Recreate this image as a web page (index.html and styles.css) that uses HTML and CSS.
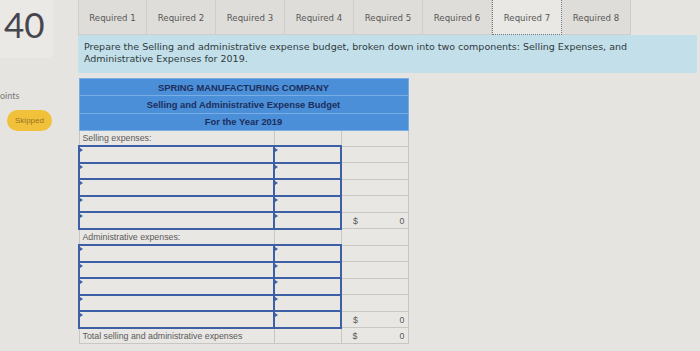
FILE: index.html
```
<!DOCTYPE html>
<html>
<head>
<meta charset="utf-8">
<link rel="stylesheet" href="styles.css">
</head>
<body>
<div class="page">
  <aside class="side">
    <div class="qcard"><span class="qnum">40</span></div>
    <div class="pts">oints</div>
    <div class="skip">Skipped</div>
  </aside>
  <main class="main">
    <nav class="tabs">
      <div class="tab">Required 1</div>
      <div class="tab">Required 2</div>
      <div class="tab">Required 3</div>
      <div class="tab">Required 4</div>
      <div class="tab">Required 5</div>
      <div class="tab">Required 6</div>
      <div class="tab active">Required 7</div>
      <div class="tab">Required 8</div>
    </nav>
    <div class="instr">Prepare the Selling and administrative expense budget, broken down into two components: Selling Expenses, and Administrative Expenses for 2019.</div>
    <table class="budget">
      <colgroup><col class="c1"><col class="c2"><col class="c3"></colgroup>
      <tr class="hd"><th colspan="3">SPRING MANUFACTURING COMPANY</th></tr>
      <tr class="hd"><th colspan="3">Selling and Administrative Expense Budget</th></tr>
      <tr class="hd"><th colspan="3">For the Year 2019</th></tr>
      <tr><td class="lbl">Selling expenses:</td><td></td><td></td></tr>
      <tr><td class="in"></td><td class="in"></td><td></td></tr>
      <tr><td class="in"></td><td class="in"></td><td></td></tr>
      <tr><td class="in"></td><td class="in"></td><td></td></tr>
      <tr><td class="in"></td><td class="in"></td><td></td></tr>
      <tr><td class="in"></td><td class="in"></td><td class="amt"><span>$</span><span>0</span></td></tr>
      <tr><td class="lbl">Administrative expenses:</td><td></td><td></td></tr>
      <tr><td class="in"></td><td class="in"></td><td></td></tr>
      <tr><td class="in"></td><td class="in"></td><td></td></tr>
      <tr><td class="in"></td><td class="in"></td><td></td></tr>
      <tr><td class="in"></td><td class="in"></td><td></td></tr>
      <tr><td class="in"></td><td class="in"></td><td class="amt"><span>$</span><span>0</span></td></tr>
      <tr><td class="lbl">Total selling and administrative expenses</td><td></td><td class="amt"><span>$</span><span>0</span></td></tr>
    </table>
  </main>
</div>
</body>
</html>
```
FILE: styles.css
```
html, body {
  margin: 0;
  padding: 0;
  background: #e6e4e0;
  overflow: hidden;
}
.page {
  display: flex;
  width: 700px;
  height: 351px;
}
.side {
  width: 78px;
  flex: none;
  display: flex;
  flex-direction: column;
  align-items: flex-start;
}
.qcard {
  width: 53px;
  height: 58px;
  flex: none;
  background: #ebe9e6;
  border-radius: 0 0 6px 0;
  box-sizing: border-box;
  padding: 8px 0 0 4px;
}
.qnum {
  font-family: "Lato", "Open Sans", sans-serif;
  font-size: 35px;
  line-height: 32px;
  color: #46464e;
}
.pts {
  font-family: "Lato", "Open Sans", sans-serif;
  font-size: 9px;
  color: #7a7a7a;
  margin: 32px 0 0 0;
  line-height: 12px;
}
.skip {
  margin: 8px 0 0 7px;
  width: 45px;
  height: 21px;
  flex: none;
  border-radius: 11px;
  background: #f1c13b;
  color: #9a7420;
  font-family: "Liberation Sans", sans-serif;
  font-size: 8px;
  display: flex;
  align-items: center;
  justify-content: center;
}
.main {
  flex: 1;
  display: flex;
  flex-direction: column;
  align-items: flex-start;
}
.tabs {
  display: flex;
  height: 35px;
  flex: none;
}
.tab {
  width: 69px;
  height: 35px;
  box-sizing: border-box;
  border: 1px solid #cfcdc9;
  border-top: none;
  border-left: none;
  background: #dfddd9;
  font-family: "DejaVu Sans", sans-serif;
  font-size: 8.6px;
  color: #575757;
  display: flex;
  align-items: center;
  justify-content: center;
  padding-top: 1px;
}
.tab:first-child { border-left: 1px solid #cfcdc9; }
.tab.active {
  background: #e9e8e5;
  border: 1px dotted #6a7888;
  border-top: none;
  width: 70px;
}
.instr {
  width: 619px;
  height: 38px;
  flex: none;
  box-sizing: border-box;
  background: #c3dfe9;
  padding: 6px 6px 0 6px;
  font-family: "DejaVu Sans", sans-serif;
  font-size: 9.5px;
  line-height: 12px;
  color: #2f3a40;
}
.budget {
  margin-top: 5px;
  width: 329px;
  flex: none;
  border-collapse: collapse;
  table-layout: fixed;
  font-family: "Liberation Sans", sans-serif;
  font-size: 8.8px;
  color: #5a5a5a;
}
.c1 { width: 195px; }
.c2 { width: 67px; }
.c3 { width: 67px; }
.hd th {
  height: 16.3px;
  padding: 0;
  background: #4a8fd8;
  border: 1px solid #78aee4;
  color: #1d2e5c;
  font-weight: bold;
  font-size: 9.4px;
  text-align: center;
}
.budget td {
  height: 14.5px;
  padding: 0 3px;
  border: 1px solid #c9c7c3;
  background: #e9e7e4;
  position: relative;
}
.budget td.in {
  border: 2px solid #3c5fa6;
}
.budget td.in::before {
  content: "";
  position: absolute;
  left: 0;
  top: 1px;
  border-left: 3px solid #3c5fa6;
  border-top: 2px solid transparent;
  border-bottom: 2px solid transparent;
}
.budget td.amt {
  text-align: right;
}
.budget td.amt span:first-child {
  float: left;
  margin-left: 8px;
}
```
